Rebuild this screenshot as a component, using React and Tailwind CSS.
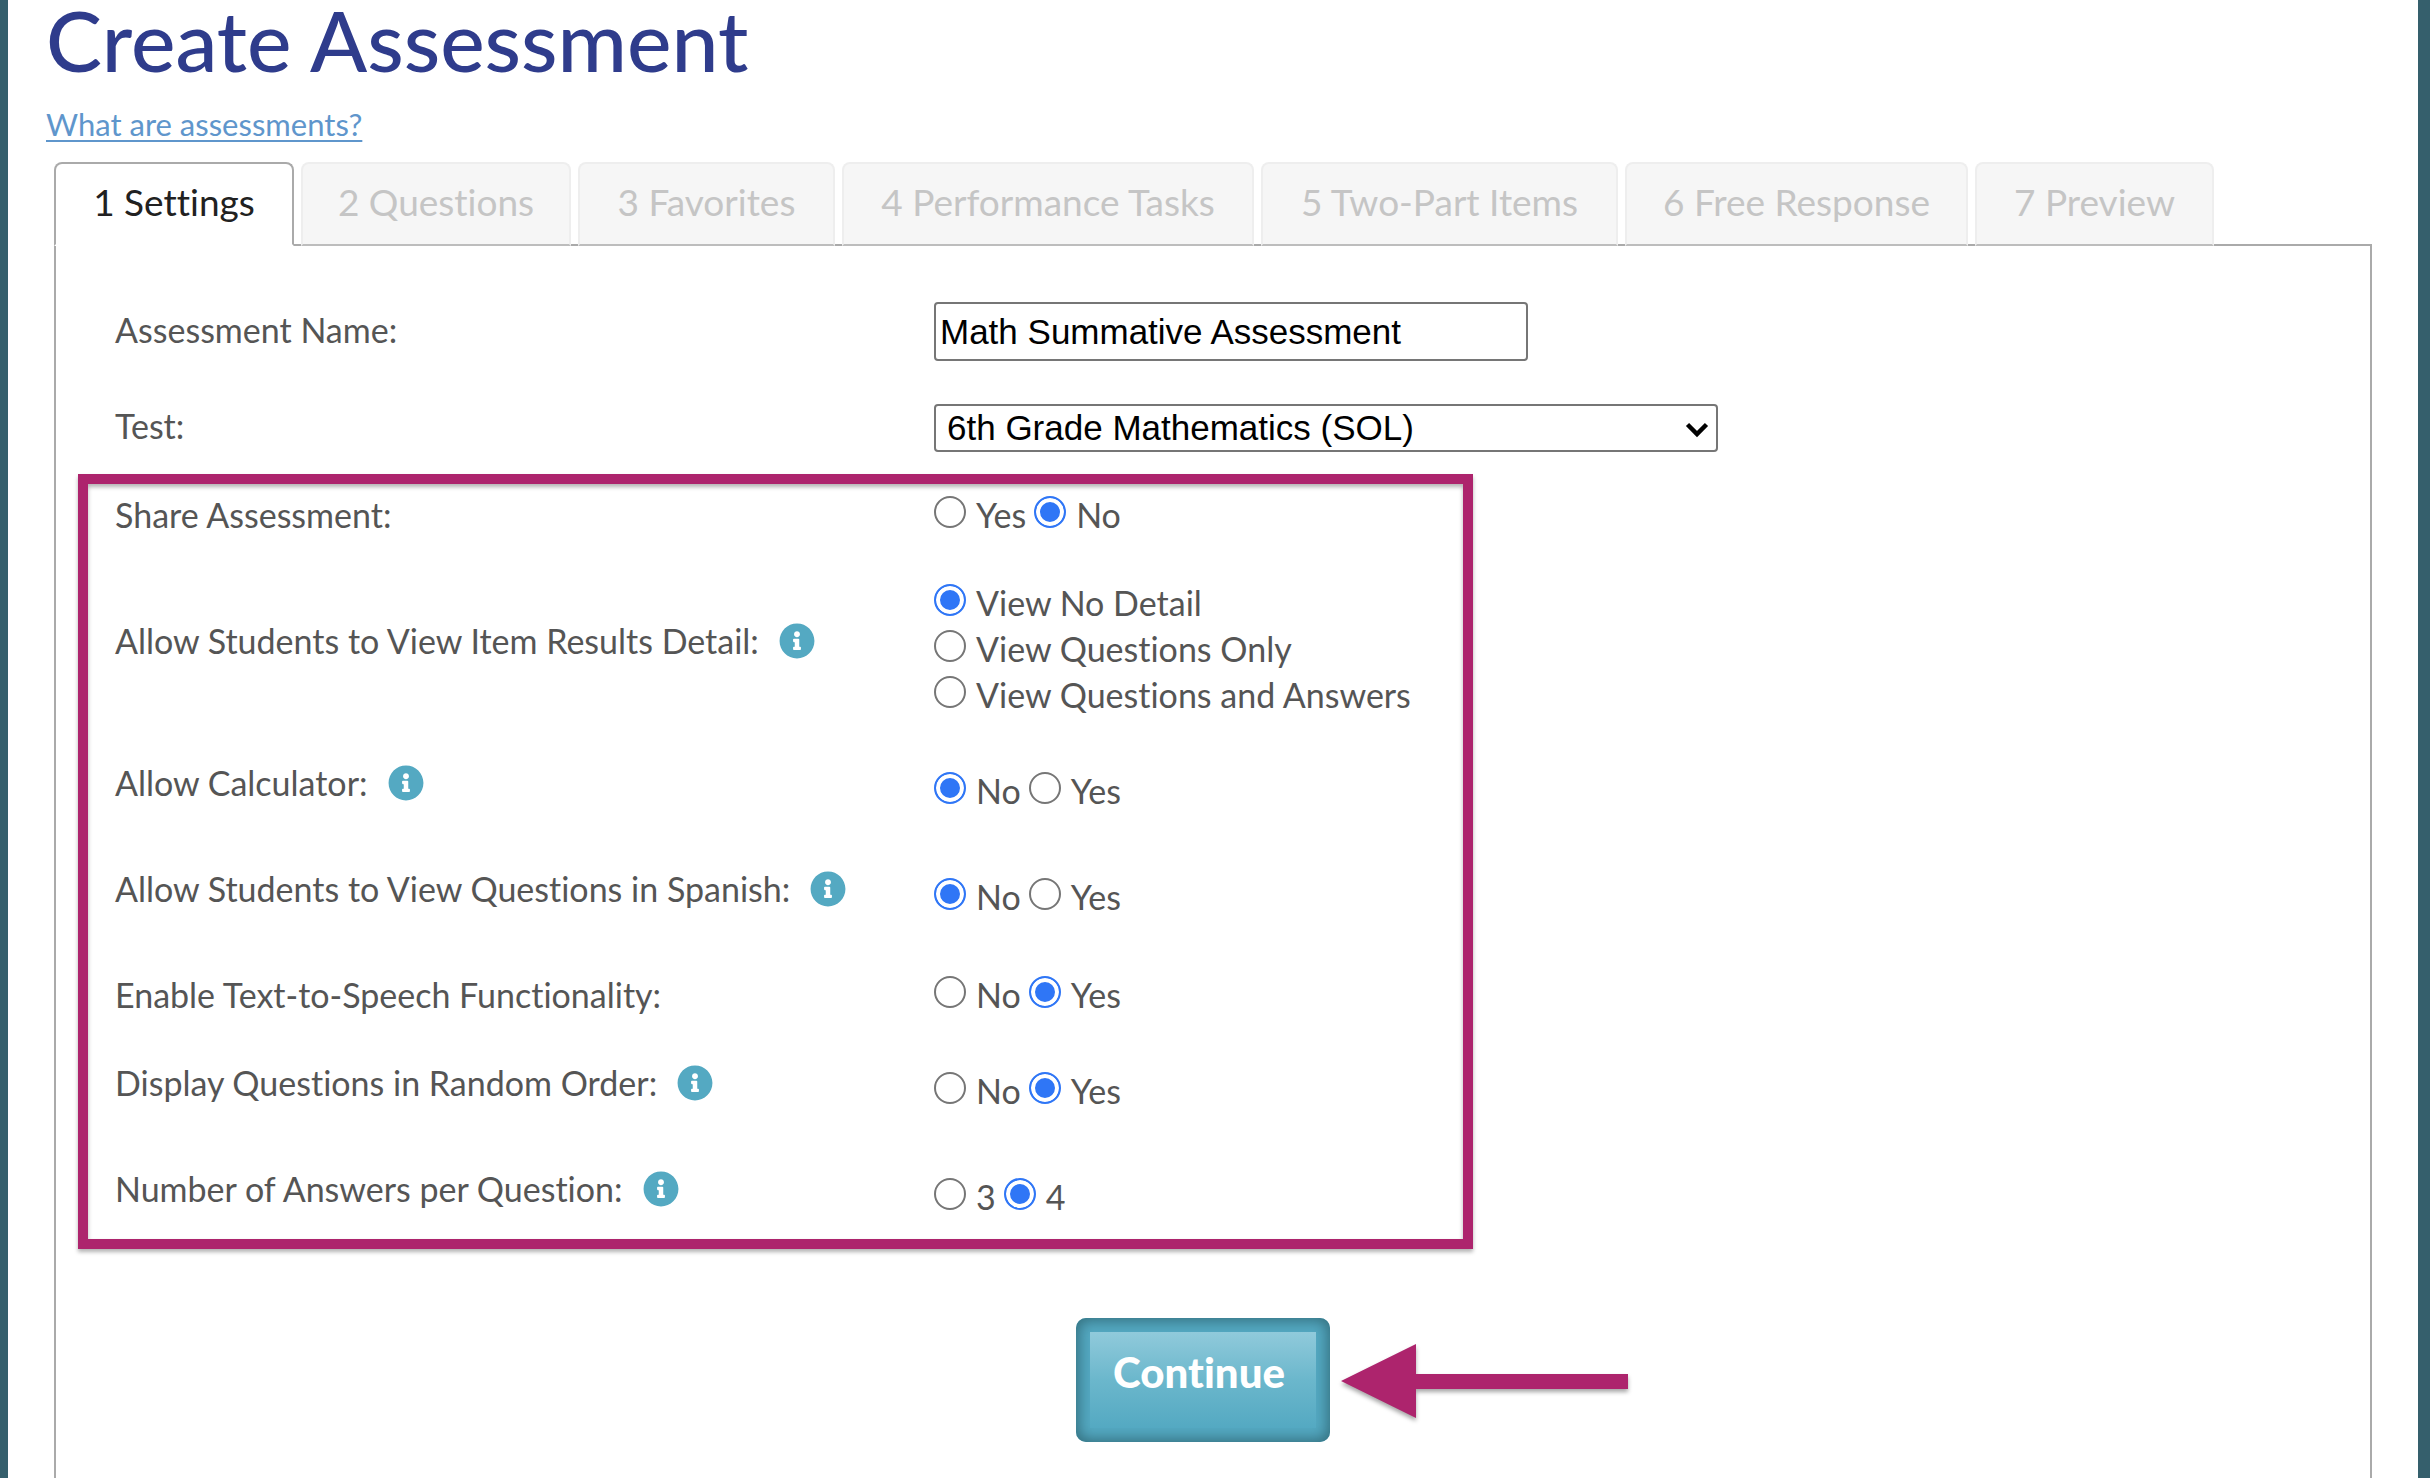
import { useState } from 'react';
import { FaInfoCircle } from 'react-icons/fa';

const TABS = [
  { label: '1 Settings', width: 'w-[240px]' },
  { label: '2 Questions', width: 'w-[270px]' },
  { label: '3 Favorites', width: 'w-[257px]' },
  { label: '4 Performance Tasks', width: 'w-[412px]' },
  { label: '5 Two-Part Items', width: 'w-[357px]' },
  { label: '6 Free Response', width: 'w-[343px]' },
  { label: '7 Preview', width: 'w-[239px]' },
];

// Labels with an info icon sit slightly higher than their options
const SETTINGS = [
  {
    id: 'share',
    label: 'Share Assessment:',
    options: ['Yes', 'No'],
    value: 'No',
    spacing: 'pt-2 pb-[42px]',
  },
  {
    id: 'detail',
    label: 'Allow Students to View Item Results Detail:',
    options: ['View No Detail', 'View Questions Only', 'View Questions and Answers'],
    value: 'View No Detail',
    info: true,
    stacked: true,
    spacing: 'pb-5',
  },
  {
    id: 'calculator',
    label: 'Allow Calculator:',
    options: ['No', 'Yes'],
    value: 'No',
    info: true,
    spacing: 'py-[22px]',
  },
  {
    id: 'spanish',
    label: 'Allow Students to View Questions in Spanish:',
    options: ['No', 'Yes'],
    value: 'No',
    info: true,
    spacing: 'py-[22px]',
  },
  {
    id: 'speech',
    label: 'Enable Text-to-Speech Functionality:',
    options: ['No', 'Yes'],
    value: 'Yes',
    spacing: 'pt-[22px] pb-5',
  },
  {
    id: 'random',
    label: 'Display Questions in Random Order:',
    options: ['No', 'Yes'],
    value: 'Yes',
    info: true,
    spacing: 'py-[22px]',
  },
  {
    id: 'answers',
    label: 'Number of Answers per Question:',
    options: ['3', '4'],
    value: '4',
    info: true,
    spacing: 'pt-[22px] pb-[11px]',
  },
];

function Tab({ label, width, active }) {
  const look = active
    ? 'border-[#aaaaaa] border-b-white bg-white text-[#212121]'
    : 'border-[#eeeeee] border-b-[#bdbdbd] bg-[#f6f6f6] text-[#c5c5c5]';
  return (
    <button
      type="button"
      role="tab"
      aria-selected={active}
      disabled={!active}
      className={`h-[84px] rounded-t-lg border-2 pb-1 text-[37px] leading-[48px] whitespace-nowrap ${width} ${look}`}
    >
      {label}
    </button>
  );
}

function SettingRow({ setting, value, onChange }) {
  const { id, label, options, info, stacked, spacing } = setting;
  return (
    <div className={`grid grid-cols-[819px_1fr] items-center ${spacing}`}>
      <div className={`flex items-center gap-5 ${info ? 'pb-4' : ''}`}>
        <span id={`${id}-label`}>{label}</span>
        {info && (
          <button type="button" aria-label={`About: ${label}`} className="text-[#54a9c2]">
            <FaInfoCircle className="size-9" />
          </button>
        )}
      </div>
      <div
        role="radiogroup"
        aria-labelledby={`${id}-label`}
        className={stacked ? 'flex flex-col' : 'flex gap-2'}
      >
        {options.map((option) => (
          <label key={option} className="flex items-start gap-[10px]">
            <input
              type="radio"
              name={id}
              checked={value === option}
              onChange={() => onChange(id, option)}
              className="mt-1 size-8 shrink-0 appearance-none rounded-full border-2 border-[#767676] bg-white shadow-[inset_0_0_0_4px_white] checked:border-[#2f76f6] checked:bg-[#2f76f6]"
            />
            {option}
          </label>
        ))}
      </div>
    </div>
  );
}

function App() {
  const [name, setName] = useState('Math Summative Assessment');
  const [values, setValues] = useState(
    Object.fromEntries(SETTINGS.map((s) => [s.id, s.value]))
  );

  const handleChange = (id, option) => {
    setValues((prev) => ({ ...prev, [id]: option }));
  };

  return (
    <div className="flex min-h-screen flex-col border-r-12 border-l-8 border-[#355f6c] bg-white px-[46px] font-['Lato',sans-serif] text-[34px] leading-[46px] text-[#555555] [font-variant-ligatures:none]">
      {/* Page heading */}
      <header className="-ml-2">
        <h1 className="text-[84px] leading-[80px] font-medium text-[#2f3c8c]">Create Assessment</h1>
        <a
          href="#about"
          className="mt-6 mb-[18px] block w-fit text-[31px] leading-10 text-[#5f96cc] underline decoration-2 underline-offset-4"
        >
          What are assessments?
        </a>
      </header>

      {/* Step tabs */}
      <div role="tablist" className="relative -mb-[2px] flex gap-[7px]">
        {TABS.map((tab, i) => (
          <Tab key={tab.label} label={tab.label} width={tab.width} active={i === 0} />
        ))}
      </div>

      <form
        onSubmit={(e) => e.preventDefault()}
        className="flex-1 border-2 border-b-0 border-[#aaaaaa] px-[22px] pt-[56px]"
      >
        <div className="grid grid-cols-[819px_1fr] items-center gap-y-[43px] pl-[37px]">
          <label htmlFor="name" className="pb-1 leading-11">Assessment Name:</label>
          <input
            id="name"
            type="text"
            value={name}
            onChange={(e) => setName(e.target.value)}
            className="h-[59px] w-[594px] rounded-sm border-2 border-[#767676] px-1 font-['Liberation_Sans',sans-serif] text-[35px] text-black"
          />
          <label htmlFor="test" className="pb-1 leading-11">Test:</label>
          <div className="relative w-[784px]">
            <select
              id="test"
              className="block h-12 w-full appearance-none rounded-sm border-2 border-[#767676] bg-white pl-[11px] font-['Liberation_Sans',sans-serif] text-[35px] leading-[42px] text-black"
            >
              <option>6th Grade Mathematics (SOL)</option>
            </select>
            <svg
              viewBox="0 0 24 16"
              className="pointer-events-none absolute top-[18px] right-[9px] h-4 w-6"
              fill="none"
              stroke="black"
              strokeWidth="4.5"
            >
              <path d="M2.5 2.5 12 12 21.5 2.5" />
            </svg>
          </div>
        </div>

        {/* Highlighted settings */}
        <div className="mt-[22px] w-[1395px] border-10 border-[#ad246d] pl-[27px] shadow-[0_3px_4px_rgba(0,0,0,0.3),inset_0_3px_4px_rgba(0,0,0,0.3)]">
          {SETTINGS.map((setting) => (
            <SettingRow
              key={setting.id}
              setting={setting}
              value={values[setting.id]}
              onChange={handleChange}
            />
          ))}
        </div>

        <div className="mt-[69px] flex justify-center pr-5">
          <div className="relative">
            <button
              type="submit"
              className="block rounded-[10px] bg-[#54a9c2] p-[14px] shadow-[inset_0_0_14px_3px_#34707f]"
            >
              <span className="block h-24 w-[226px] bg-linear-to-b from-[#90cadb] via-[#6bb7cc] to-[#54a9c2] pr-2 text-[42px] leading-[80px] font-black text-white">
                Continue
              </span>
            </button>
            <svg
              viewBox="0 0 288 76"
              className="absolute top-[26px] left-full ml-[11px] h-[76px] w-[288px] overflow-visible drop-shadow-[0_3px_2px_rgba(0,0,0,0.35)]"
              fill="#ad246d"
            >
              <path d="M0 37 75 0V30H287V45H75V74Z" />
            </svg>
          </div>
        </div>
      </form>
    </div>
  );
}

export default App;
